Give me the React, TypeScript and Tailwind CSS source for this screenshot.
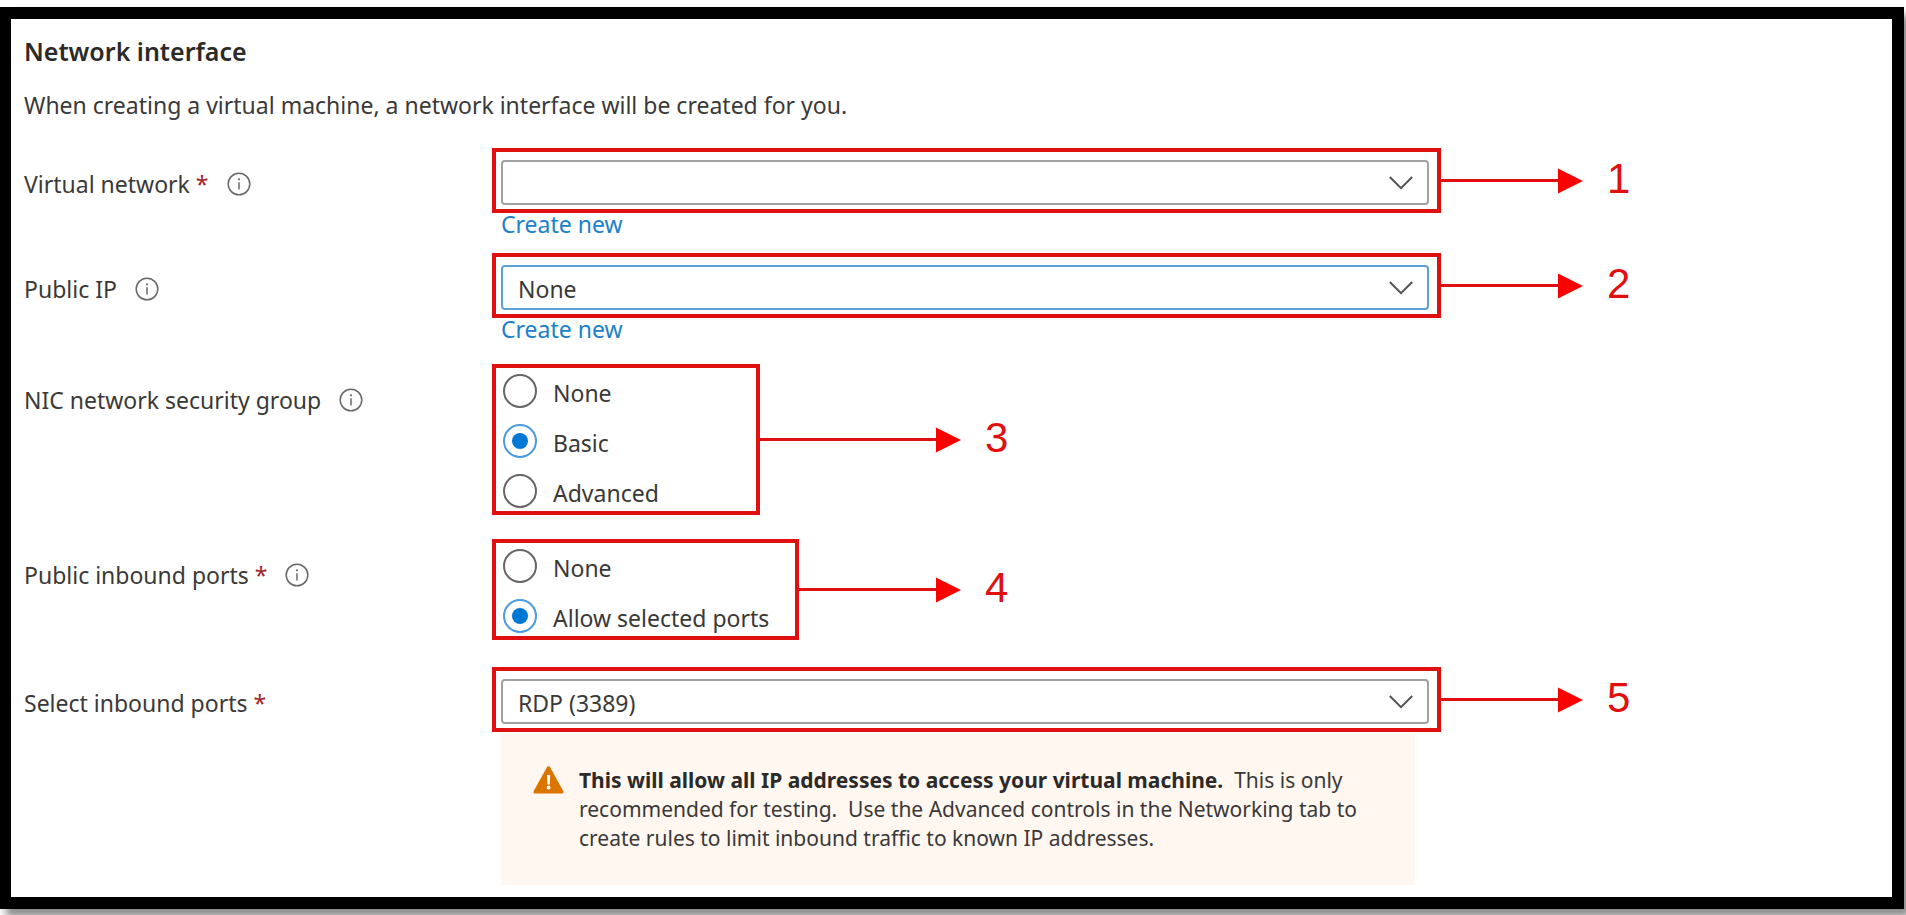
import type { ReactNode } from 'react';

function InfoIcon() {
  return (
    <svg viewBox="0 0 24 24" className="size-6 shrink-0" fill="none" aria-hidden="true">
      <circle cx="12" cy="12" r="10.8" stroke="#6b6967" strokeWidth="1.5" />
      <path d="M12 10.2V17.5" stroke="#6b6967" strokeWidth="1.5" />
      <circle cx="12" cy="7.3" r="1.1" fill="#6b6967" />
    </svg>
  );
}

function WarningIcon() {
  return (
    <svg viewBox="0 0 31 28" className="h-7 w-[31px] shrink-0" aria-hidden="true">
      <path
        d="M13.9 1.3a1.8 1.8 0 0 1 3.2 0L30.3 24.9a1.7 1.7 0 0 1-1.5 2.6H2.2a1.7 1.7 0 0 1-1.5-2.6Z"
        fill="#db7500"
      />
      <path d="M14 9h3.2l-.5 9.400h-2.200Z" fill="#fff" />
      <circle cx="15.600" cy="21.500" r="1.900" fill="#fff" />
    </svg>
  );
}

function Arrow({ className }: { className: string }) {
  return (
    <span className={`flex items-center ${className}`} aria-hidden="true">
      <span className="h-[3px] flex-1 bg-[#e01010]" />
      <svg viewBox="0 0 25 26" className="h-[26px] w-[25px] shrink-0">
        <path d="M0 .5 25 13 0 25.500Z" fill="#ff0000" />
      </svg>
    </span>
  );
}

function Step({ n }: { n: number }) {
  return (
    <span className="ml-6 w-6 pb-1 font-['Liberation_Sans',sans-serif] text-[42px] leading-none text-[#e01010]">
      {n}
    </span>
  );
}

type LabelProps = { text: string; htmlFor?: string; id?: string; required?: boolean; info?: boolean };

function FieldLabel({ text, htmlFor, id, required, info }: LabelProps) {
  const content = (
    <>
      {text}
      {required && <span className="text-[#a4262c]"> *</span>}
    </>
  );
  return (
    <div className="flex items-center gap-[18px] self-start pt-5 leading-8">
      {htmlFor ? <label htmlFor={htmlFor}>{content}</label> : <span id={id}>{content}</span>}
      {info && (
        <button type="button" aria-label={`About ${text}`}>
          <InfoIcon />
        </button>
      )}
    </div>
  );
}

function SelectField({ id, value, n, focused }: { id: string; value: string; n: number; focused?: boolean }) {
  return (
    <div className="flex items-center">
      <div className="flex-1 border-4 border-[#e01010] pt-2 pr-2 pb-1 pl-[5px]">
        <div className="relative">
          <select
            id={id}
            defaultValue={value}
            className={`block h-[45px] w-full appearance-none rounded-[4px] border-2 bg-white pt-1 pr-12 pl-[15px] outline-none ${
              focused ? 'border-[#5ba3d6]' : 'border-[#a3a19f]'
            }`}
          >
            <option>{value}</option>
          </select>
          <svg
            viewBox="0 0 24 14"
            className="pointer-events-none absolute top-4 right-4 h-3.5 w-6"
            fill="none"
            aria-hidden="true"
          >
            <path d="M.8 1 12 12.200 23.200 1" stroke="#55534f" strokeWidth="2" />
          </svg>
        </div>
      </div>
      <Arrow className="w-[142px]" />
      <Step n={n} />
    </div>
  );
}

type RadioProps = {
  name: string;
  labelledBy: string;
  options: string[];
  value: string;
  n: number;
  boxClass: string;
};

function RadioField({ name, labelledBy, options, value, n, boxClass }: RadioProps) {
  return (
    <div className="flex items-center">
      <div className="flex w-[469px] items-center">
        <div
          role="radiogroup"
          aria-labelledby={labelledBy}
          className={`flex flex-col gap-4 border-4 border-[#e01010] pt-1.5 pb-[3px] pl-[7px] ${boxClass}`}
        >
          {options.map((o) => (
            <label key={o} className="flex h-[34px] items-center gap-4">
              <input
                type="radio"
                name={name}
                defaultChecked={o === value}
                className="grid size-[34px] shrink-0 appearance-none place-content-center rounded-full border-2 border-[#666] checked:border-[#4a9be0] checked:before:size-4 checked:before:rounded-full checked:before:bg-[#0078d4] checked:before:content-['']"
              />
              <span className="pt-1">{o}</span>
            </label>
          ))}
        </div>
        <Arrow className="flex-1" />
      </div>
      <Step n={n} />
    </div>
  );
}

function Row({ className, children }: { className: string; children: ReactNode }) {
  return <div className={`grid grid-cols-[468px_minmax(0,1fr)] ${className}`}>{children}</div>;
}

export default function App() {
  return (
    <div className="min-h-screen overflow-hidden bg-white pt-[7px] pr-0.5 pb-[7px] font-['Noto_Sans',sans-serif] text-[23px] text-[#3a3938]">
      <main className="border-12 border-l-[11px] border-black bg-white pt-3.5 pr-[261px] pb-3 pl-[13px] shadow-[6px_8px_8px_rgba(0,0,0,0.45)]">
        <h1 className="text-[25px] leading-9 font-semibold text-[#2b2a29]">Network interface</h1>
        <p className="mt-5 leading-8">
          When creating a virtual machine, a network interface will be created for you.
        </p>

        <form>
          <Row className="mt-[27px]">
            <FieldLabel text="Virtual network" htmlFor="vnet" required info />
            <div>
              <SelectField id="vnet" value="" n={1} />
              <a href="#new-vnet" className="ml-[9px] block w-fit leading-[22px] text-[#2080c8]">
                Create new
              </a>
            </div>
          </Row>

          <Row className="mt-[18px]">
            <FieldLabel text="Public IP" htmlFor="public-ip" info />
            <div>
              <SelectField id="public-ip" value="None" n={2} focused />
              <a href="#new-ip" className="ml-[9px] block w-fit leading-[22px] text-[#2080c8]">
                Create new
              </a>
            </div>
          </Row>

          <Row className="mt-6">
            <FieldLabel text="NIC network security group" id="nsg-label" info />
            <RadioField
              name="nsg"
              labelledBy="nsg-label"
              options={['None', 'Basic', 'Advanced']}
              value="Basic"
              n={3}
              boxClass="w-[268px]"
            />
          </Row>

          <Row className="mt-6">
            <FieldLabel text="Public inbound ports" id="inbound-label" required info />
            <RadioField
              name="inbound"
              labelledBy="inbound-label"
              options={['None', 'Allow selected ports']}
              value="Allow selected ports"
              n={4}
              boxClass="w-[307px]"
            />
          </Row>

          <Row className="mt-[27px]">
            <FieldLabel text="Select inbound ports" htmlFor="ports" required />
            <div>
              <SelectField id="ports" value="RDP (3389)" n={5} />
              <div
                role="note"
                className="mt-0.5 mr-[216px] ml-[9px] flex gap-[15px] bg-[#fff7f0] px-8 py-8 text-[21px] leading-[29px]"
              >
                <WarningIcon />
                <p>
                  <strong className="font-bold text-[#2b2a29]">
                    This will allow all IP addresses to access your virtual machine.
                  </strong>
                  &nbsp; This is only recommended for testing.&nbsp; Use the Advanced controls in the Networking tab to
                  create rules to limit inbound traffic to known IP addresses.
                </p>
              </div>
            </div>
          </Row>
        </form>
      </main>
    </div>
  );
}
